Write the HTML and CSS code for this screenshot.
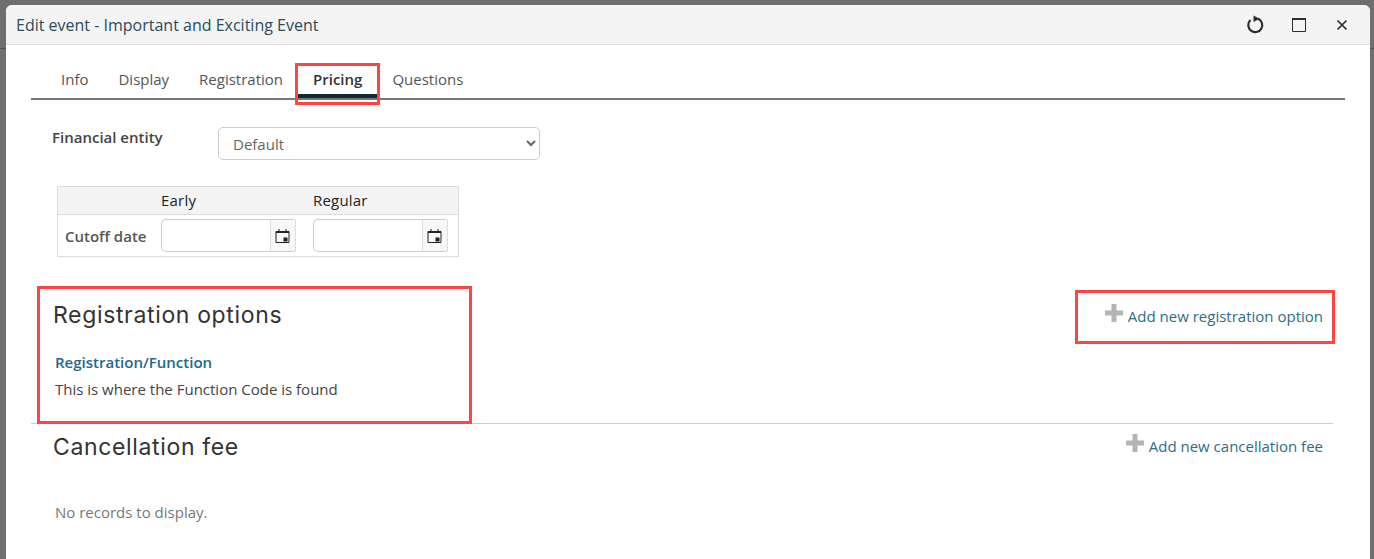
FILE: index.html
```html
<!DOCTYPE html>
<html lang="en">
<head>
<meta charset="utf-8">
<title>Edit event</title>
<link rel="stylesheet" href="styles.css">
</head>
<body>
<div class="window">
  <header class="titlebar">
    <div class="title">Edit event - Important and Exciting Event</div>
    <div class="controls">
      <svg class="ctl" width="20" height="20" viewBox="0 0 20 20"><path d="M5.500 5A7 7 0 1 0 12.800 3.600" fill="none" stroke="#2e2e2e" stroke-width="2.200"/><path d="M8.500 .5 14.500 3.800 8.500 7Z" fill="#2e2e2e"/></svg>
      <svg class="ctl" width="14" height="14" viewBox="0 0 14 14"><path d="M.5 1h13v12.500H.5Z" fill="none" stroke="#2e2e2e"/><path d="M0 1h14" stroke="#2e2e2e" stroke-width="2"/></svg>
      <svg class="ctl ctl-close" width="12" height="12" viewBox="0 0 12 12"><path d="M1.500 1.500l9 9M10.500 1.500l-9 9" fill="none" stroke="#2e2e2e" stroke-width="1.700"/></svg>
    </div>
  </header>
  <div class="content">
    <nav class="tabs">
      <a class="tab">Info</a>
      <a class="tab">Display</a>
      <a class="tab">Registration</a>
      <a class="tab active">Pricing<span class="mark mark-tab"></span></a>
      <a class="tab">Questions</a>
    </nav>
    <div class="form-row">
      <label class="field-label">Financial entity</label>
      <select class="select"><option>Default</option></select>
    </div>
    <div class="dates">
      <div class="dates-head">
        <span class="head-cell">Early</span>
        <span class="head-cell">Regular</span>
      </div>
      <div class="dates-row">
        <span class="row-label">Cutoff date</span>
        <div class="date-input"><span class="date-field"></span><span class="date-btn"><svg class="cal" width="15" height="16" viewBox="0 0 15 16"><path d="M1 3.500h13v11H1Z" fill="none" stroke="#222"/><path d="M1 3h13v2H1Z" fill="#222"/><path d="M4 1v2M11 1v2" stroke="#222"/><path d="M8.500 9.500h4v4h-4Z" fill="#222"/></svg></span></div>
        <div class="date-input"><span class="date-field"></span><span class="date-btn"><svg class="cal" width="15" height="16" viewBox="0 0 15 16"><path d="M1 3.500h13v11H1Z" fill="none" stroke="#222"/><path d="M1 3h13v2H1Z" fill="#222"/><path d="M4 1v2M11 1v2" stroke="#222"/><path d="M8.500 9.500h4v4h-4Z" fill="#222"/></svg></span></div>
      </div>
    </div>
    <section class="section section-reg">
      <div class="section-head">
        <h2 class="section-title">Registration options</h2>
        <a class="add-link"><svg class="plus" width="18" height="18" viewBox="0 0 18 18"><path d="M6.500 0h5v6.500H18v5h-6.500V18h-5v-6.500H0v-5h6.500Z" fill="#b4b4b4"/></svg>Add new registration option</a>
      </div>
      <a class="option-name">Registration/Function</a>
      <p class="option-desc">This is where the Function Code is found</p>
      <span class="mark mark-reg"></span>
      <span class="mark mark-add"></span>
    </section>
    <section class="section section-fee">
      <div class="section-head">
        <h2 class="section-title">Cancellation fee</h2>
        <a class="add-link"><svg class="plus" width="18" height="18" viewBox="0 0 18 18"><path d="M6.500 0h5v6.500H18v5h-6.500V18h-5v-6.500H0v-5h6.500Z" fill="#b4b4b4"/></svg>Add new cancellation fee</a>
      </div>
      <p class="empty">No records to display.</p>
    </section>
  </div>
</div>
</body>
</html>
```
FILE: styles.css
```css
* { box-sizing: border-box; }
html, body { height: 100%; }
body {
  margin: 0;
  height: 559px;
  overflow: hidden;
  padding: 5px 4px 0 6px;
  background: linear-gradient(#6f6f6f 0 48px, #505050 48px 49px, #6f6f6f 49px);
  font-family: "Open Sans", sans-serif;
  font-size: 15px;
  color: #444;
}
.window {
  height: 554px;
  background: #fff;
  border-radius: 6px 6px 0 0;
  overflow: hidden;
}
.titlebar {
  height: 40px;
  background: #f4f4f4;
  border-bottom: 1px solid #ddd;
  padding: 0 22px 0 10px;
  display: flex;
  align-items: center;
  justify-content: space-between;
}
.title { color: #2c4a5c; font-size: 16px; }
.controls { display: flex; align-items: center; gap: 27px; }
.ctl-close { margin-left: 3px; }
.content { padding: 0 25px 0; }
.tabs {
  display: flex;
  height: 55px;
  padding: 19px 0 0 15px;
  border-bottom: 2px solid #777;
}
.tab {
  position: relative;
  padding: 0 15px;
  height: 34px;
  line-height: 30px;
  color: #555;
  font-size: 15px;
}
.tab.active {
  color: #333;
  font-weight: 600;
  border-bottom: 4px solid #0f2a36;
}
.mark { position: absolute; border: 3px solid #ff4444; pointer-events: none; }
.mark-tab { left: -3px; top: -1px; right: -3px; bottom: -11px; }
.form-row {
  display: flex;
  padding: 27px 0 0 21px;
  height: 86px;
}
.field-label { width: 166px; font-weight: 600; color: #444; font-size: 15px; line-height: 20px; }
.select {
  width: 322px;
  height: 33px;
  padding: 0 10px;
  background: #fff;
  border: 1px solid #ccc;
  border-radius: 5px;
  font: 15px "Open Sans", sans-serif;
  color: #666;
}
.dates {
  width: 402px;
  margin-left: 26px;
  border: 1px solid #ddd;
}
.dates-head {
  height: 28px;
  background: #f4f4f4;
  border-bottom: 1px solid #ddd;
  display: grid;
  grid-template-columns: 103px 152px 1fr;
  line-height: 26px;
  color: #222;
  font-weight: 500;
  letter-spacing: .2px;
}
.head-cell:first-child { grid-column: 2; }
.dates-row {
  height: 41px;
  display: grid;
  grid-template-columns: 103px 152px 135px;
  align-items: center;
}
.row-label { padding-left: 7px; font-weight: 600; color: #555; }
.date-input {
  width: 135px;
  height: 33px;
  display: flex;
  border: 1px solid #ccc;
  border-right: 0;
  border-radius: 5px 3px 3px 5px;
}
.date-field { flex: 1; }
.date-btn {
  width: 26px;
  background: #f8f8f8;
  border-left: 1px solid #ddd;
  border-right: 1px solid #ddd;
  display: flex;
  align-items: center;
  justify-content: center;
}
.cal { margin-right: 1px; }
.section { position: relative; }
.section-reg {
  margin: 30px 12px 0 0;
  height: 137px;
  border-bottom: 1px solid #ccc;
}
.section-head {
  display: flex;
  justify-content: space-between;
  align-items: center;
  padding: 0 10px 0 22px;
  height: 58px;
}
.section-title {
  margin: 0 0 2px;
  font: 400 23px "Inter", sans-serif;
  letter-spacing: .65px;
  color: #333;
}
.add-link { display: flex; align-items: center; color: #2d6d88; font-size: 15px; }
.plus { margin-right: 5px; position: relative; top: -3px; }
.option-name {
  display: block;
  margin: 5px 0 0 24px;
  color: #23698a;
  font-weight: 600;
  line-height: 24px;
}
.option-desc { margin: 3px 0 0 24px; color: #444; line-height: 24px; }
.mark-reg { left: 6px; top: -1px; width: 435px; height: 138px; }
.mark-add { left: 1044px; top: 3px; width: 260px; height: 54px; }
.section-fee { margin-right: 12px; }
.section-fee .section-head { height: 44px; }
.section-fee .section-title { margin: 2px 0 0; }
.empty { margin: 32px 0 0 24px; color: #777; line-height: 24px; }
```
